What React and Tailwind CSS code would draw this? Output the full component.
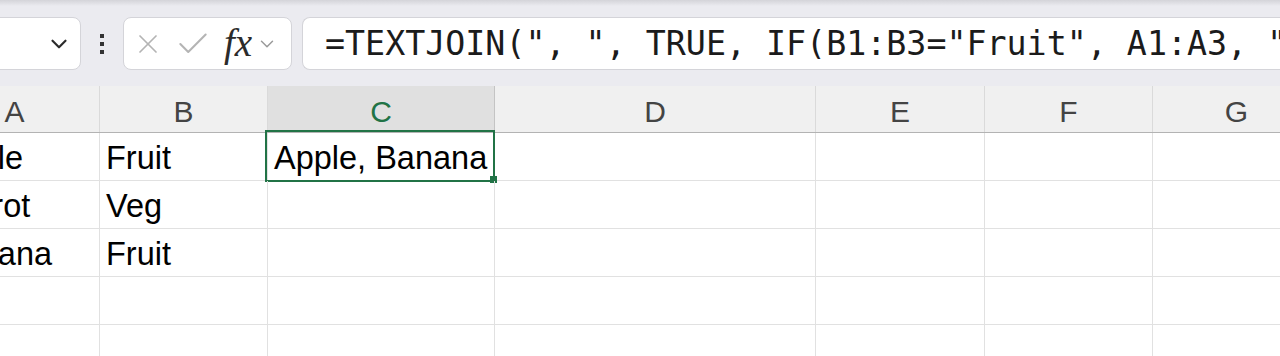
import { ChevronDown, X, Check } from 'lucide-react';

const cols = [
  { key: 'A', w: 'w-[170px]' },
  { key: 'B', w: 'w-[168px]' },
  { key: 'C', w: 'w-[227px]' },
  { key: 'D', w: 'w-[321px]' },
  { key: 'E', w: 'w-[169px]' },
  { key: 'F', w: 'w-[168px]' },
  { key: 'G', w: 'w-[168px]' },
];

const rows = [
  ['Apple', 'Fruit', 'Apple, Banana'],
  ['Carrot', 'Veg', ''],
  ['Banana', 'Fruit', ''],
  ['', '', ''],
  ['', '', ''],
];

const App = () => {
  return (
    <div className="w-[1280px] h-[356px] overflow-hidden bg-white font-['Liberation_Sans',sans-serif]">
      {/* toolbar */}
      <div className="h-[86px] bg-[#ebebf0] relative">
        <div className="absolute inset-x-0 top-0 h-[6px] bg-linear-to-b from-[#d4d4d9] to-[#ebebf0]"></div>
        <div className="flex items-center pt-[17px]">
          <div className="-ml-[20px] w-[101px] h-[53px] bg-white border border-[#d4d4d9] rounded-lg flex items-center justify-end pr-[8px]">
            <ChevronDown size={26} strokeWidth={2} className="text-[#2b2b2b]" />
          </div>
          <div className="ml-[19px] flex flex-col gap-[4px]">
            <span className="w-[4px] h-[4px] bg-[#333]"></span>
            <span className="w-[4px] h-[4px] bg-[#333]"></span>
            <span className="w-[4px] h-[4px] bg-[#333]"></span>
          </div>
          <div className="ml-[19px] w-[169px] h-[53px] bg-white border border-[#d4d4d9] rounded-lg flex items-center pl-[8px]">
            <X size={32} strokeWidth={1.3} className="text-[#b4b4b4]" />
            <Check size={38} strokeWidth={1.3} className="ml-[10px] text-[#b4b4b4]" />
            <span className="ml-[12px] font-['Liberation_Serif',serif] italic text-[39px] leading-none text-[#2b2b2b] -mt-[2px]">fx</span>
            <ChevronDown size={22} strokeWidth={1.6} className="ml-[4px] text-[#9a9a9a]" />
          </div>
          <div className="ml-[10px] flex-1 h-[53px] bg-white border border-r-0 border-[#d4d4d9] rounded-l-lg flex items-center pl-[22px] overflow-hidden">
            <span className="font-['DejaVu_Sans_Mono',monospace] text-[33.3px] leading-none text-[#1b1b1b] whitespace-nowrap">
              =TEXTJOIN(", ", TRUE, IF(B1:B3="Fruit", A1:A3, ""))
            </span>
          </div>
        </div>
      </div>

      {/* sheet */}
      <div className="-ml-[70px] w-[1400px]">
        <div className="flex h-[47px] bg-[#f0f0f0] border-b border-[#b3b3b3]">
          {cols.map((c) => (
            <div
              key={c.key}
              className={`${c.w} shrink-0 border-r ${c.key === 'C' ? 'bg-[#e0e0e0] text-[#217346] border-[#c4c4c4]' : 'text-[#444] border-[#dadada]'} text-center text-[30px] leading-[51px]`}
            >
              {c.key}
            </div>
          ))}
        </div>
        {rows.map((r, i) => (
          <div key={i} className="flex h-[48px] border-b border-[#e1e1e1]">
            {cols.map((c, j) => (
              <div
                key={c.key}
                className={`${c.w} shrink-0 border-r border-[#e1e1e1] relative ${j === 0 ? 'pl-[10px]' : 'pl-[6px]'} text-[32.5px] leading-[51px] text-black whitespace-nowrap`}
              >
                {r[j] || ''}
                {i === 0 && c.key === 'C' && (
                  <div className="absolute -left-[3px] -top-[3px] w-[230px] h-[52px] border-2 border-[#217346]">
                    <div className="absolute -right-[4px] -bottom-[3px] w-[7px] h-[7px] bg-[#217346]"></div>
                  </div>
                )}
              </div>
            ))}
          </div>
        ))}
      </div>
    </div>
  );
};

export default App;
